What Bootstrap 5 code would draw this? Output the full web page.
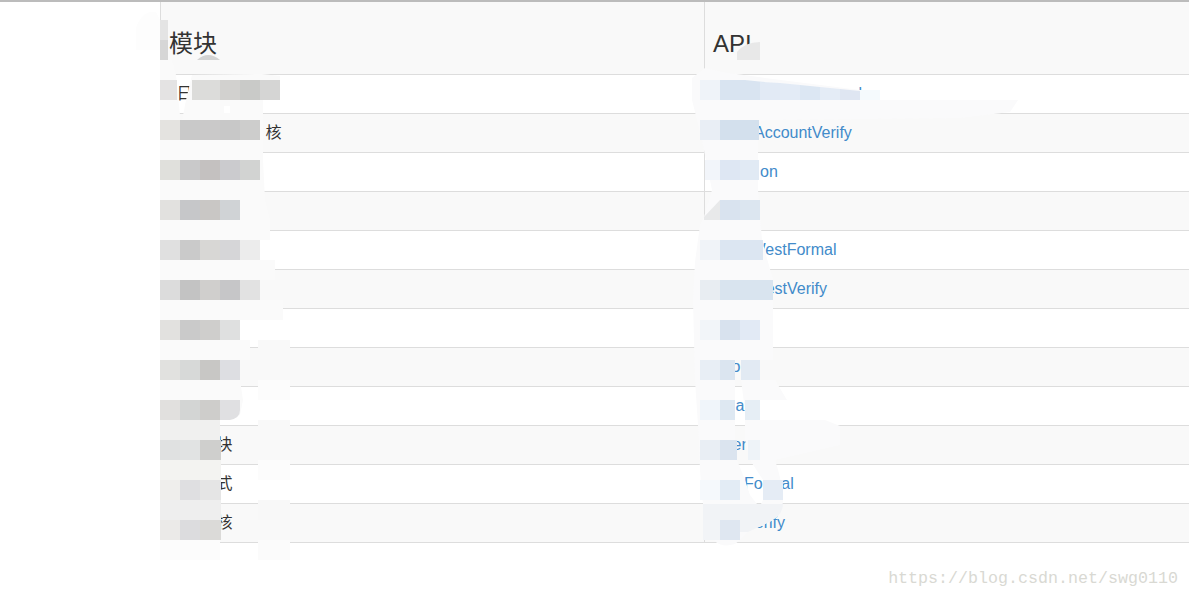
<!DOCTYPE html>
<html lang="zh">
<head>
<meta charset="utf-8">
<title>模块 API</title>
<link href="https://cdn.jsdelivr.net/npm/bootstrap@5.3.0/dist/css/bootstrap.min.css" rel="stylesheet">
<style>
html,body{height:100%;overflow:hidden;background:#fff}
body{font-family:"Liberation Sans","Noto Sans CJK SC",sans-serif;font-size:16px;color:#333}
.page{height:598px;border-top:2px solid #bcbcbc;position:relative}
.sheet{margin-left:160px}
.api-table{margin:0;table-layout:fixed;width:1029px;--bs-table-border-color:#ddd;--bs-table-color:#333;color:#333}
.api-table thead tr{height:72px}
.api-table tbody tr{height:39px}
.api-table th{font-size:24px;font-weight:400;padding:0 8px 13px;vertical-align:bottom;background:#f9f9f9;line-height:34px;border-bottom:1px solid #ddd}
.api-table th:first-child{width:544px;border-left:1px solid #ddd}
.api-table th:last-child{border-left:1px solid #ddd}
.api-table td{padding:0 8px;line-height:22px;font-size:16px;border-bottom:1px solid #ddd;white-space:nowrap;vertical-align:middle}
.api-table tbody tr:nth-child(even) td{background:#f9f9f9;--bs-table-bg:#f9f9f9}
.api-table td:last-child{border-left:1px solid #ddd}
.api-table a{color:#428bca;text-decoration:none}
.in16{padding-left:16px!important}.in105{padding-left:105px!important}.in56{padding-left:56px!important}
.in153{padding-left:153.5px!important}.in49{padding-left:49px!important}.in55{padding-left:55px!important}
.in45{padding-left:45.5px!important}.in52{padding-left:52.7px!important}.in26{padding-left:26.5px!important}
.in30{padding-left:30.5px!important}.in27{padding-left:27.5px!important}.in39{padding-left:39px!important}.in40{padding-left:40px!important}
.veil{position:absolute;left:0;top:-2px;width:1189px;height:598px;pointer-events:none}
.mark-url{position:absolute;right:11px;bottom:8px;font-family:"Liberation Mono",monospace;font-size:16.67px;color:#d9d9d3;line-height:22px}
</style>
</head>
<body>
<div class="page">
  <div class="sheet">
    <table class="table api-table">
      <thead><tr><th>模块</th><th>API</th></tr></thead>
      <tbody>
        <tr><td class="in16">日</td><td class="in153"><a href="#">l</a></td></tr>
        <tr><td class="in105">核</td><td class="in49"><a href="#">AccountVerify</a></td></tr>
        <tr><td></td><td class="in55"><a href="#">on</a></td></tr>
        <tr><td></td><td></td></tr>
        <tr><td></td><td class="in45"><a href="#">WestFormal</a></td></tr>
        <tr><td></td><td class="in52"><a href="#">TestVerify</a></td></tr>
        <tr><td></td><td></td></tr>
        <tr><td></td><td class="in26"><a href="#">o</a></td></tr>
        <tr><td></td><td class="in30"><a href="#">a</a></td></tr>
        <tr><td class="in56">块</td><td class="in27"><a href="#">er</a></td></tr>
        <tr><td class="in56">式</td><td class="in39"><a href="#">Formal</a></td></tr>
        <tr><td class="in56">核</td><td class="in40"><a href="#">Verify</a></td></tr>
      </tbody>
    </table>
  </div>
  <svg class="veil" viewBox="0 0 1189 598" aria-hidden="true">
    <!-- left smear -->
    <path d="M136 28Q142 10 156 12L160 20V50H136Z" fill="#fdfdfd"/>
    <path fill-rule="evenodd" d="M160 60L172 60L176 75L181 126L186 100L192 75L262 74L280 76V100H263V160L265 200L270 220V240H260V260H275V280H260V300H283V320H240V340H250V360H240V380L243 400L240 415L230 420H160ZM224 106H230V113H224Z" fill="#fafafa"/>
    <rect x="258" y="340" width="32" height="20" fill="#f9f9f9"/><rect x="258" y="380" width="32" height="20" fill="#fcfcfc"/>
    <rect x="258" y="420" width="32" height="20" fill="#f9f9f9"/><rect x="258" y="460" width="32" height="20" fill="#fcfcfc"/><rect x="258" y="500" width="32" height="20" fill="#f8f8f8"/><rect x="258" y="540" width="32" height="20" fill="#fbfbfb"/>
    <rect x="160" y="20" width="8" height="20" fill="#e4e4e4"/><rect x="160" y="40" width="8" height="20" fill="#d6d6d6"/>
    <path d="M197 60Q208 50 220 60Z" fill="#d3d3d3"/>
    <path d="M737 60V52Q745 42 760 42V60Z" fill="#e8e8e8"/>
    <g>
      <rect x="160" y="80" width="17" height="20" fill="#e4e3e3"/><rect x="192" y="80" width="28" height="20" fill="#dcdcda"/><rect x="220" y="80" width="20" height="20" fill="#d2d1cf"/><rect x="240" y="80" width="20" height="20" fill="#c9cac8"/><rect x="260" y="80" width="20" height="20" fill="#d5d5d4"/>
      <rect x="160" y="120" width="20" height="20" fill="#e4e3e0"/><rect x="180" y="120" width="20" height="20" fill="#c9c9c9"/><rect x="200" y="120" width="20" height="20" fill="#cac9c9"/><rect x="220" y="120" width="20" height="20" fill="#c8c8c8"/><rect x="240" y="120" width="20" height="20" fill="#cdcdcc"/>
      <rect x="160" y="160" width="20" height="20" fill="#e0e0dc"/><rect x="180" y="160" width="20" height="20" fill="#c9c9ca"/><rect x="200" y="160" width="20" height="20" fill="#c4c1c0"/><rect x="220" y="160" width="20" height="20" fill="#cbcbce"/><rect x="240" y="160" width="20" height="20" fill="#d2d3d2"/>
      <rect x="160" y="200" width="20" height="20" fill="#e2e1df"/><rect x="180" y="200" width="20" height="20" fill="#c6c7c9"/><rect x="200" y="200" width="20" height="20" fill="#c9c7c5"/><rect x="220" y="200" width="20" height="20" fill="#d0d3d6"/>
      <rect x="160" y="240" width="20" height="20" fill="#e0e0e0"/><rect x="180" y="240" width="20" height="20" fill="#cacaca"/><rect x="200" y="240" width="20" height="20" fill="#d8d7d5"/><rect x="220" y="240" width="20" height="20" fill="#d6d6d8"/><rect x="240" y="240" width="20" height="20" fill="#ececec"/>
      <rect x="160" y="280" width="20" height="20" fill="#dcdcdc"/><rect x="180" y="280" width="20" height="20" fill="#c3c3c3"/><rect x="200" y="280" width="20" height="20" fill="#d0cfcd"/><rect x="220" y="280" width="20" height="20" fill="#c6c6c8"/><rect x="240" y="280" width="20" height="20" fill="#e2e2e2"/>
      <rect x="160" y="320" width="20" height="20" fill="#e2e1df"/><rect x="180" y="320" width="20" height="20" fill="#cacaca"/><rect x="200" y="320" width="20" height="20" fill="#cfcecc"/><rect x="220" y="320" width="20" height="20" fill="#dfe0e0"/>
      <rect x="160" y="360" width="20" height="20" fill="#e1e1df"/><rect x="180" y="360" width="20" height="20" fill="#d7d9d8"/><rect x="200" y="360" width="20" height="20" fill="#c8c7c5"/><rect x="220" y="360" width="20" height="20" fill="#dddee2"/>
      <path d="M160 400H240V410Q240 418 230 420H160Z" fill="#e0e0e2"/><rect x="160" y="400" width="20" height="20" fill="#e1e0de"/><rect x="180" y="400" width="20" height="20" fill="#d3d5d4"/><rect x="200" y="400" width="20" height="20" fill="#cecdcb"/>
      <rect x="160" y="420" width="60" height="20" fill="#f0f0ef"/>
      <rect x="160" y="440" width="20" height="20" fill="#e0e1e1"/><rect x="180" y="440" width="20" height="20" fill="#e1e3e3"/><rect x="200" y="440" width="21" height="20" fill="#cfcfcd"/>
      <rect x="160" y="460" width="61" height="20" fill="#f3f3f1"/>
      <rect x="160" y="480" width="20" height="20" fill="#efeeec"/><rect x="180" y="480" width="20" height="20" fill="#dfdfe1"/><rect x="200" y="480" width="21" height="20" fill="#e5e5e5"/>
      <rect x="160" y="500" width="61" height="20" fill="#eeeeee"/>
      <rect x="160" y="520" width="20" height="20" fill="#ebeae8"/><rect x="180" y="520" width="20" height="20" fill="#dcdcde"/><rect x="200" y="520" width="21" height="20" fill="#dbdad8"/>
      <rect x="160" y="540" width="60" height="20" fill="#fcfcfc"/>
    </g>
    <!-- right smear -->
    <path fill-rule="evenodd" d="M692 78L705 68L722 72L765 78L860 90L880 90V100H1018L1010 112L960 118L770 120L758 122V190L762 240L768 262L773 280V360H760V380H775L787 400H760V420H825L840 426V445L775 460Q782 480 783 500Q783 517 765 524L748 532L740 540L735 544Q715 550 708 530Q700 500 699 440L695 380L693 300L695 262L700 225L704 217L712 190L702 140L692 100ZM735 360H741V380L745 410V440L750 460L763 480V500L761 504H757L750 495L745 480L737 460L735 440Z" fill="#fafafb"/>
    <g>
      <rect x="700" y="80" width="20" height="20" fill="#eff3f9"/><path d="M720 80H745L765 82V100H720Z" fill="#d9e4f1"/><path d="M760 82L780 83V100H760Z" fill="#e2eaf5"/><path d="M780 83L800 85V100H780Z" fill="#e3ebf6"/><path d="M800 85L820 87V100H800Z" fill="#dce7f3"/><path d="M820 87L840 89V100H820Z" fill="#e4ecf6"/><path d="M840 89L860 91V100H840Z" fill="#dfe6f2"/><rect x="860" y="90" width="20" height="10" fill="#f5fafd"/>
      <rect x="700" y="120" width="20" height="20" fill="#e9eef5"/><rect x="720" y="120" width="39" height="20" fill="#d3e0ed"/>
      <rect x="705" y="160" width="15" height="20" fill="#f2f5fa"/><rect x="720" y="160" width="20" height="20" fill="#dee7f3"/><rect x="740" y="160" width="19" height="20" fill="#e1eaf4"/>
      <path d="M704 217L720 200V220H704Z" fill="#e8e9ea"/><rect x="720" y="200" width="20" height="20" fill="#d9e3ef"/><rect x="740" y="200" width="20" height="20" fill="#dce6f0"/>
      <rect x="700" y="240" width="20" height="20" fill="#f0f3f8"/><rect x="720" y="240" width="43" height="20" fill="#dce6f2"/>
      <rect x="700" y="280" width="20" height="20" fill="#e8edf2"/><rect x="720" y="280" width="53" height="20" fill="#d9e4ef"/>
      <rect x="700" y="320" width="20" height="20" fill="#f2f5f9"/><rect x="720" y="320" width="20" height="20" fill="#d8e2ee"/><rect x="740" y="320" width="20" height="20" fill="#e2eaf5"/>
      <rect x="700" y="360" width="20" height="20" fill="#e8eef5"/><rect x="720" y="360" width="15" height="20" fill="#dbe5f0"/><rect x="741" y="360" width="19" height="20" fill="#e2eaf3"/>
      <rect x="700" y="400" width="20" height="20" fill="#f0f5fa"/><rect x="720" y="400" width="15" height="20" fill="#dee8f2"/><rect x="745" y="400" width="15" height="20" fill="#e6eef5"/>
      <rect x="700" y="440" width="20" height="20" fill="#e9eef4"/><rect x="720" y="440" width="17" height="20" fill="#dbe4ef"/><rect x="748" y="440" width="12" height="20" fill="#eef3f8"/>
      <rect x="700" y="480" width="20" height="20" fill="#f5f9fc"/><rect x="720" y="480" width="20" height="20" fill="#e3ecf5"/><rect x="763" y="480" width="20" height="20" fill="#e5ecf5"/>
      <path d="M703 504H783Q783 517 765 524L748 532H738V520H703Z" fill="#f1f3f6"/>
      <rect x="703" y="520" width="17" height="20" fill="#f2f4f7"/><rect x="720" y="520" width="20" height="20" fill="#dfe7f1"/>
    </g>
  </svg>
  <div class="mark-url">https://blog.csdn.net/swg0110</div>
</div>
</body>
</html>
